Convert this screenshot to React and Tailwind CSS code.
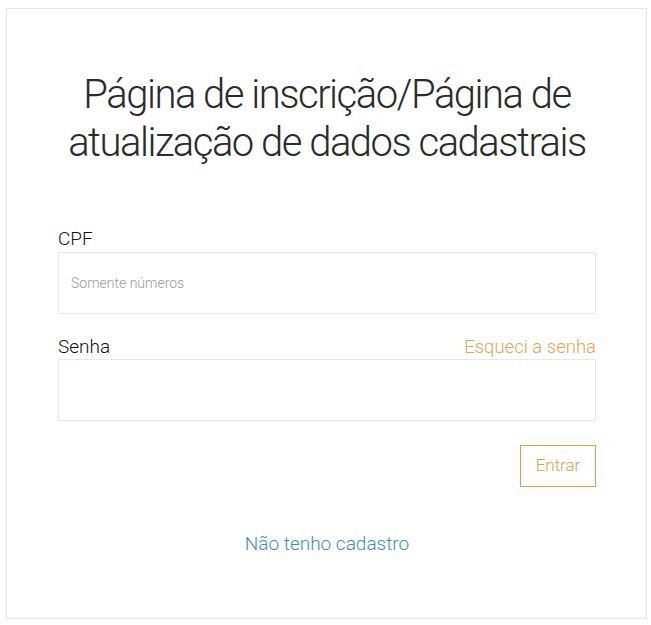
export default function App() {
  return (
    <div className="min-h-screen bg-white pt-2 px-[6px]" style={{ fontFamily: 'Roboto, "Open Sans", sans-serif' }}>
      <div className="w-[641px] h-[611px] border border-[#e6e6e6] pl-[51px] pr-[50px] pt-[62px]">
        <h1 className="text-center text-[40px] leading-[48px] font-light text-[#2b2b2b] tracking-[-1.5px]">
          Página de inscrição/Página de atualização de dados cadastrais
        </h1>

        <div className="mt-[60px]">
          <label className="block text-[19px] leading-[24px] font-light text-[#111]">CPF</label>
          <input
            className="mt-[1px] w-full h-[62px] border border-[#e8e8e8] px-3 text-[14px] font-light text-[#333] placeholder:text-[#9a9a9a] outline-none"
            placeholder="Somente números"
          />
        </div>

        <div className="mt-[21px]">
          <div className="flex items-end justify-between">
            <label className="text-[19px] leading-[24px] font-light text-[#111]">Senha</label>
            <a className="text-[18.5px] leading-[24px] font-light text-[#e3a452]">Esqueci a senha</a>
          </div>
          <input type="password" className="w-full h-[62px] border border-[#e8e8e8] px-3 outline-none" />
        </div>

        <div className="flex justify-end mt-[24px]">
          <button className="w-[76px] h-[42px] border border-[#dba14a] text-[17px] font-light text-[#dba14a]">Entrar</button>
        </div>

        <div className="mt-[43px] text-center">
          <a className="text-[19px] font-light text-[#3d8bc6]">Não tenho cadastro</a>
        </div>
      </div>
    </div>
  )
}
